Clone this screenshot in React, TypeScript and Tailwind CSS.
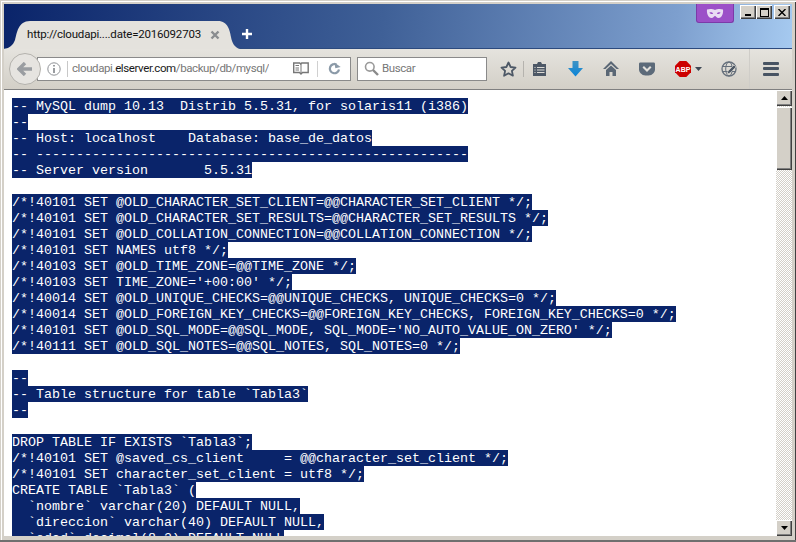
const lines = [
  "-- MySQL dump 10.13  Distrib 5.5.31, for solaris11 (i386)",
  "--",
  "-- Host: localhost    Database: base_de_datos",
  "-- ------------------------------------------------------",
  "-- Server version       5.5.31",
  "",
  "/*!40101 SET @OLD_CHARACTER_SET_CLIENT=@@CHARACTER_SET_CLIENT */;",
  "/*!40101 SET @OLD_CHARACTER_SET_RESULTS=@@CHARACTER_SET_RESULTS */;",
  "/*!40101 SET @OLD_COLLATION_CONNECTION=@@COLLATION_CONNECTION */;",
  "/*!40101 SET NAMES utf8 */;",
  "/*!40103 SET @OLD_TIME_ZONE=@@TIME_ZONE */;",
  "/*!40103 SET TIME_ZONE='+00:00' */;",
  "/*!40014 SET @OLD_UNIQUE_CHECKS=@@UNIQUE_CHECKS, UNIQUE_CHECKS=0 */;",
  "/*!40014 SET @OLD_FOREIGN_KEY_CHECKS=@@FOREIGN_KEY_CHECKS, FOREIGN_KEY_CHECKS=0 */;",
  "/*!40101 SET @OLD_SQL_MODE=@@SQL_MODE, SQL_MODE='NO_AUTO_VALUE_ON_ZERO' */;",
  "/*!40111 SET @OLD_SQL_NOTES=@@SQL_NOTES, SQL_NOTES=0 */;",
  "",
  "--",
  "-- Table structure for table `Tabla3`",
  "--",
  "",
  "DROP TABLE IF EXISTS `Tabla3`;",
  "/*!40101 SET @saved_cs_client     = @@character_set_client */;",
  "/*!40101 SET character_set_client = utf8 */;",
  "CREATE TABLE `Tabla3` (",
  "  `nombre` varchar(20) DEFAULT NULL,",
  "  `direccion` varchar(40) DEFAULT NULL,",
  "  `edad` decimal(8,2) DEFAULT NULL",
]

const bevel = "bg-[#d4d0c8] shadow-[inset_1px_1px_0_#ffffff,inset_-1px_-1px_0_#404040,inset_-2px_-2px_0_#808080]"

const App = () => {
  return (
    <div className="w-[796px] h-[542px] flex flex-col overflow-hidden bg-[#d4d0c8] pt-1 px-1 border-b-2 border-[#6f6f6f] shadow-[inset_1px_1px_0_#d4d0c8,inset_2px_2px_0_#ffffff,inset_-1px_0_0_#404040] font-['Roboto',sans-serif]">
      {/* Title bar + tab */}
      <div className="h-[45px] shrink-0 flex justify-between border-b border-[#2c4a7e] bg-[linear-gradient(97deg,#0a246a_0%,#3f6097_48%,#7d9fce_85%,#a6caf0_100%)]">
        <div className="flex items-end">
          <div className="relative w-[236px] h-[28px] -mb-px">
            <svg className="absolute inset-0" width="236" height="28" viewBox="0 0 236 28">
              <path d="M0 28C6 27 9 24 11 19C13 12 14 0 26 0H214C224 0 226 10 227 16C228 22 231 27 236 28Z" fill="#e4e2dd" />
            </svg>
            <div className="relative flex items-center h-full pl-[23px] text-[11.5px] tracking-[-0.2px] text-[#111]">
              <span className="w-[175px] whitespace-pre">http://cloudapi....date=2016092703</span>
              <svg className="ml-[8px]" width="10" height="10" viewBox="0 0 10 10"><path d="M1.500 1.500l7 7M8.500 1.500l-7 7" stroke="#8a8d90" strokeWidth="2.400" /></svg>
            </div>
          </div>
          <svg className="ml-[1px] mb-[8px]" width="12" height="12" viewBox="0 0 12 12"><path d="M6 1v10M1 6h10" stroke="#fff" strokeWidth="2.400" /></svg>
        </div>
        <div className="flex items-start">
          <div className="w-[38px] h-[19px] mr-[6px] flex items-center justify-center rounded-b-[3px] bg-[#9c50c8] border border-t-0 border-[#7c3aa8]">
            <svg width="18" height="11" viewBox="0 0 18 11"><path fillRule="evenodd" d="M1 1.500C4 .5 7 1 9 2c2-1 5-1.500 8-.5C17.500 5 16 10 12.500 10 10.500 10 10 8 9 8S7.500 10 5.500 10C2 10 .5 5 1 1.500ZM3.500 4.500C4 6 6 6.500 7.200 5.500 6.500 4.200 4.500 3.800 3.500 4.500ZM14.500 4.500C14 6 12 6.500 10.800 5.500 11.500 4.200 13.500 3.800 14.500 4.500Z" fill="#e9dcf3" /></svg>
          </div>
          <div className="flex mt-px mr-[2px]">
            <div className={`w-[16px] h-[14px] flex items-end justify-center pb-[3px] ${bevel}`}><div className="w-[6px] h-[2px] bg-black" /></div>
            <div className={`w-[16px] h-[14px] flex items-center justify-center ${bevel}`}><div className="w-[9px] h-[9px] border border-t-2 border-black" /></div>
            <div className={`ml-[2px] w-[16px] h-[14px] flex items-center justify-center ${bevel}`}>
              <svg width="8" height="7" viewBox="0 0 8 7"><path d="M.5 0l7 7M7.500 0l-7 7" stroke="#000" strokeWidth="1.400" /></svg>
            </div>
          </div>
        </div>
      </div>

      {/* Navigation toolbar */}
      <div className="h-[41px] shrink-0 flex items-center pb-px border-b border-[#808080] bg-[linear-gradient(#e5e3de,#d3cfc7)]">
        <div className="relative z-10 w-[32px] h-[32px] ml-[5px] rounded-full border border-[#b4b2ad] bg-[#e6e4e0] flex items-center justify-center">
          <svg width="16" height="14" viewBox="0 0 16 14"><path d="M8 1L2 7l6 6M2.500 7H15" fill="none" stroke="#9a9da1" strokeWidth="3.400" /></svg>
        </div>
        <div className="w-[314px] h-[24px] -ml-[4px] flex items-center bg-white border border-[#8a8a8a] text-[11.5px] tracking-[-0.4px] text-[#777]">
          <svg className="ml-[9px]" width="14" height="14" viewBox="0 0 14 14" fill="none"><circle cx="7" cy="7" r="6.200" stroke="#8f9296" /><path d="M7 6v5" stroke="#777b80" strokeWidth="1.500" /><path d="M7 3v1.600" stroke="#777b80" strokeWidth="1.500" /></svg>
          <div className="w-px h-[16px] ml-[6px] bg-[#c8c8c8]" />
          <span className="ml-[4px] pt-px w-[197px] overflow-hidden whitespace-nowrap">cloudapi.<span className="text-[#1a1a1a]">elserver.com</span>/backup/db/mysql/3</span>
          <svg className="ml-[24px]" width="16" height="13" viewBox="0 0 16 13" fill="none"><path d="M.7 1h6l1 1 1-1h6.500v9.500H9.500L8 12l-1.500-1.500H.7Z" stroke="#777" strokeWidth="1.400" /><path d="M2.500 3.500h3.500M2.500 6h3.500M2.500 8h3.500" stroke="#777" /><path d="M8 2v9" stroke="#777" /></svg>
          <div className="w-px h-[16px] ml-[8px] bg-[#d0d0d0]" />
          <svg className="ml-[10px]" width="13" height="13" viewBox="0 0 13 13" fill="none"><path d="M11 7.500A4.600 4.600 0 1 1 8.500 2.500" stroke="#8b9aa8" strokeWidth="2.200" /><path d="M6.800 6V0l5.500 5.500Z" fill="#8b9aa8" transform="rotate(-10 9 3)" /></svg>
        </div>
        <div className="w-[130px] h-[24px] ml-[6px] flex items-center bg-white border border-[#8a8a8a] text-[11.5px] tracking-[-0.4px] text-[#777]">
          <svg className="ml-[6px]" width="15" height="15" viewBox="0 0 15 15" fill="none"><circle cx="5.800" cy="5.800" r="4.300" stroke="#9a9a9a" strokeWidth="1.600" /><path d="M9 9l5 5" stroke="#8a8a8a" strokeWidth="2.400" /></svg>
          <span className="ml-[3px] pt-px">Buscar</span>
        </div>
        <div className="w-[22px] ml-[10px] flex justify-center">
          <svg width="17" height="16" viewBox="0 0 17 16" fill="none"><path d="M8.500 1.500l2.100 4.500 4.900.6-3.600 3.300 1 4.800-4.400-2.400-4.400 2.400 1-4.800L1.500 6.600l4.900-.6Z" stroke="#4d5866" strokeWidth="1.800" strokeLinejoin="round" /></svg>
        </div>
        <div className="w-px h-[16px] ml-[4px] bg-[#b5b3ae]" />
        <div className="w-[16px] ml-[7px] flex justify-center">
          <svg width="15" height="16" viewBox="0 0 15 16"><path d="M1 3h4l1-2h3l1 2h4v12H1Z" fill="#4d5866" /><path d="M5 6.500h7.500M5 9h7.500M5 11.500h7.500" stroke="#dcdad5" /><path d="M2.500 6.500h1M2.500 9h1M2.500 11.500h1" stroke="#dcdad5" /></svg>
        </div>
        <div className="w-[16px] ml-[20px] flex justify-center">
          <svg width="15" height="16" viewBox="0 0 15 16">
            <defs><linearGradient id="dl" x1="0" y1="0" x2="0" y2="1"><stop offset="0" stopColor="#3f93c4" /><stop offset="1" stopColor="#0a84d8" /></linearGradient></defs>
            <path d="M4.500 0h6v7H15l-7.500 8.500L0 7h4.500Z" fill="url(#dl)" />
          </svg>
        </div>
        <div className="w-[16px] ml-[20px] flex justify-center">
          <svg width="16" height="15" viewBox="0 0 16 15"><path d="M8 0L0 8h2.500L8 3l5.500 5H16Z" fill="#5a6775" /><path d="M3 9l5-4.500L13 9v6H9.500v-4h-3v4H3Z" fill="#5a6775" /></svg>
        </div>
        <div className="w-[16px] ml-[20px] flex justify-center">
          <svg width="17" height="14" viewBox="0 0 17 14"><path d="M1.500 0h14A1.500 1.500 0 0 1 17 1.500V6A7 7 0 0 1 10 14H7A7 7 0 0 1 0 6V1.500A1.500 1.500 0 0 1 1.500 0Z" fill="#5c6a79" /><path d="M4.500 4.500l4 4 4-4" fill="none" stroke="#e2e0db" strokeWidth="2.200" /></svg>
        </div>
        <div className="w-[16px] ml-[20px] flex justify-center">
          <svg width="16" height="16" viewBox="0 0 16 16"><path d="M4.700 0h6.600L16 4.700v6.600L11.300 16H4.700L0 11.300V4.700Z" fill="#cc0000" /><text x="8" y="10.500" textAnchor="middle" fill="#fff" fontSize="7" fontWeight="700" fontFamily="Liberation Sans">ABP</text></svg>
        </div>
        <svg className="ml-[4px]" width="7" height="4" viewBox="0 0 7 4"><path d="M0 0h7L3.500 4Z" fill="#3d4855" /></svg>
        <div className="w-[16px] ml-[19px] flex justify-center">
          <svg width="16" height="16" viewBox="0 0 16 16" fill="none"><circle cx="8" cy="8" r="7" stroke="#66707c" strokeWidth="1.300" /><ellipse cx="8" cy="8" rx="3.300" ry="7" stroke="#66707c" /><path d="M1 5.500h14M1 10.500h14" stroke="#66707c" /><path d="M6 13l1-3 6-6 2 2-6 6Z" fill="#4f5a67" stroke="#e0ded9" strokeWidth=".6" /></svg>
        </div>
        <div className="w-px h-[40px] ml-[12px] bg-[#cfcdc8]" />
        <div className="ml-[13px] w-[16px] flex flex-col gap-[2.500px]">
          <div className="h-[3px] rounded-[1px] bg-[#485463]" />
          <div className="h-[3px] rounded-[1px] bg-[#485463]" />
          <div className="h-[3px] rounded-[1px] bg-[#485463]" />
        </div>
      </div>

      {/* Page */}
      <div className="h-[446px] shrink-0 flex">
        <div className="flex-1 min-w-0 overflow-hidden bg-white pl-[8px] pt-[8px] font-['Liberation_Mono',monospace] text-[13.33px] text-white">
          {lines.map((line, i) => (
            <div key={i} className="h-4 whitespace-pre">
              {line && <span className="block w-fit h-4 leading-[18px] overflow-hidden bg-[#0a246a]">{line}</span>}
            </div>
          ))}
        </div>
        {/* Scrollbar */}
        <div className="w-4 shrink-0 flex flex-col bg-[repeating-conic-gradient(#d4d0c8_0_25%,#ffffff_0_50%)] bg-[length:2px_2px]">
          <div className={`h-[16px] flex items-center justify-center ${bevel}`}>
            <svg width="7" height="4" viewBox="0 0 7 4"><path d="M3.500 0L7 4H0Z" fill="#000" /></svg>
          </div>
          <div className={`h-[63px] mt-px ${bevel}`} />
          <div className={`h-[16px] mt-auto flex items-center justify-center ${bevel}`}>
            <svg width="7" height="4" viewBox="0 0 7 4"><path d="M0 0h7L3.500 4Z" fill="#000" /></svg>
          </div>
        </div>
      </div>
    </div>
  )
}

export default App
